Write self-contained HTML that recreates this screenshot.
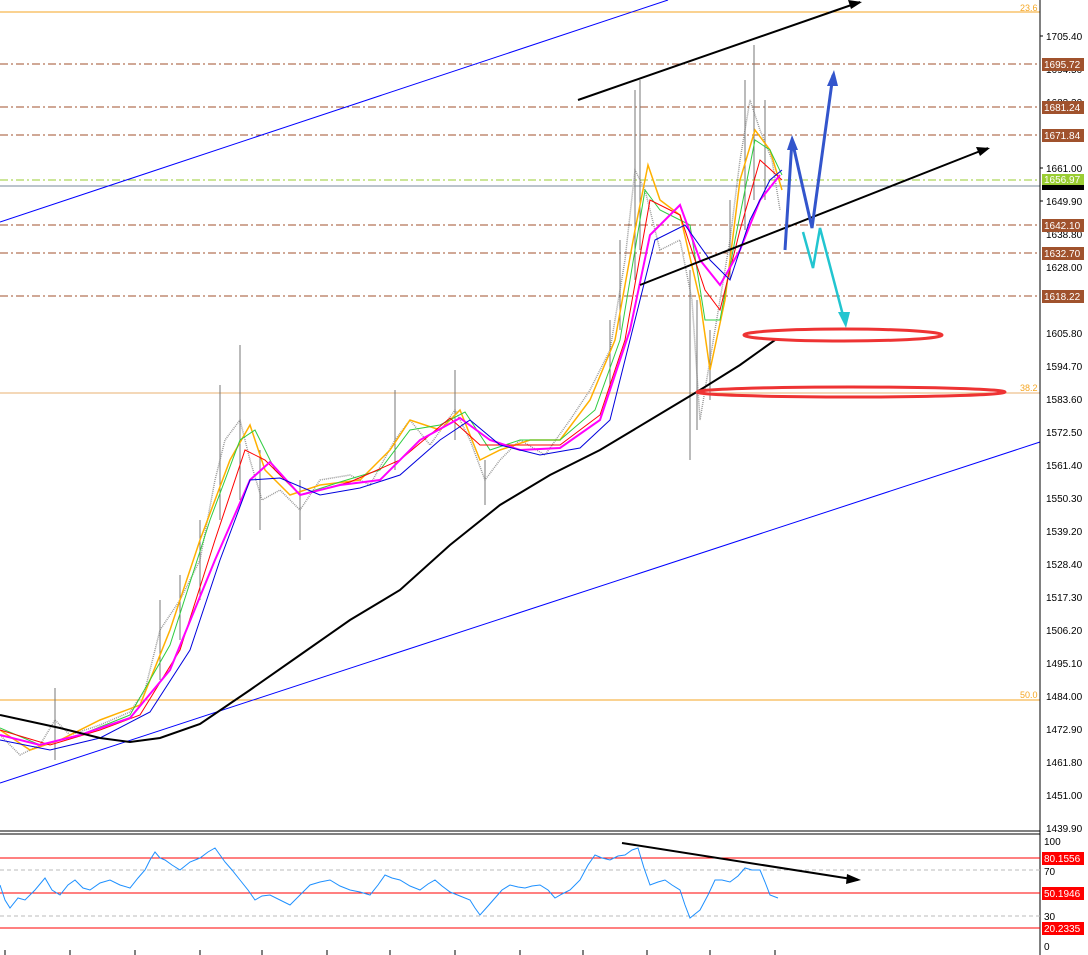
<!DOCTYPE html>
<html><head><style>
body{margin:0;background:#fff;font-family:"Liberation Sans",sans-serif;}
svg{display:block}
.l{font-size:10px;fill:#000}
.t{font-size:10px;fill:#fff}
</style></head><body>
<svg width="1088" height="955" viewBox="0 0 1088 955" xmlns="http://www.w3.org/2000/svg">
<rect width="1088" height="955" fill="#fff"/>
<line x1="0" y1="12" x2="1040" y2="12" stroke="#f5a623" stroke-width="1"/>
<text x="1020" y="11" font-size="9" fill="#f5a623">23.6</text>
<line x1="0" y1="393" x2="1040" y2="393" stroke="#e8b070" stroke-width="1"/>
<text x="1020" y="391" font-size="9" fill="#f5a623">38.2</text>
<line x1="0" y1="700" x2="1040" y2="700" stroke="#f5a623" stroke-width="1"/>
<text x="1020" y="698" font-size="9" fill="#f5a623">50.0</text>
<g stroke="#a0522d" stroke-dasharray="8,3,2,3" stroke-width="1">
<line x1="0" y1="64" x2="1040" y2="64"/><line x1="0" y1="107" x2="1040" y2="107"/>
<line x1="0" y1="135" x2="1040" y2="135"/><line x1="0" y1="225" x2="1040" y2="225"/>
<line x1="0" y1="253" x2="1040" y2="253"/><line x1="0" y1="296" x2="1040" y2="296"/>
</g>
<line x1="0" y1="180" x2="1040" y2="180" stroke="#9acd32" stroke-dasharray="8,3,2,3"/>
<line x1="0" y1="186" x2="1040" y2="186" stroke="#778899"/>
<line x1="0" y1="222" x2="668" y2="0" stroke="#0000ff" stroke-width="1"/>
<line x1="0" y1="783" x2="1040" y2="442" stroke="#0000ff" stroke-width="1"/>
<polyline fill="none" stroke="#999" stroke-width="1.5" stroke-dasharray="1,1" points="0,735 20,755 40,745 55,720 70,735 100,725 130,712 145,690 160,630 180,600 200,560 215,480 225,440 240,420 250,460 262,500 280,490 300,510 320,480 350,475 370,485 395,440 410,420 430,445 455,410 470,440 485,480 500,460 520,440 545,455 570,420 590,390 610,350 625,260 635,170 645,190 660,250 680,240 692,300 700,420 710,360 720,300 730,240 740,160 750,100 760,130 772,160 780,210"/>
<g stroke="#777" stroke-width="1">
<line x1="55" y1="688" x2="55" y2="760"/><line x1="220" y1="385" x2="220" y2="520"/>
<line x1="240" y1="345" x2="240" y2="500"/><line x1="395" y1="390" x2="395" y2="470"/>
<line x1="455" y1="370" x2="455" y2="440"/><line x1="485" y1="460" x2="485" y2="505"/>
<line x1="635" y1="90" x2="635" y2="280"/><line x1="640" y1="80" x2="640" y2="250"/>
<line x1="690" y1="270" x2="690" y2="460"/><line x1="697" y1="300" x2="697" y2="430"/>
<line x1="745" y1="80" x2="745" y2="230"/><line x1="754" y1="45" x2="754" y2="200"/>
<line x1="160" y1="600" x2="160" y2="680"/><line x1="180" y1="575" x2="180" y2="640"/>
<line x1="200" y1="520" x2="200" y2="600"/><line x1="260" y1="450" x2="260" y2="530"/>
<line x1="300" y1="480" x2="300" y2="540"/><line x1="620" y1="240" x2="620" y2="330"/>
<line x1="610" y1="320" x2="610" y2="390"/><line x1="710" y1="330" x2="710" y2="400"/>
<line x1="730" y1="200" x2="730" y2="280"/><line x1="765" y1="100" x2="765" y2="200"/>
</g>
<polyline fill="none" stroke="#ffb000" stroke-width="1.5" points="0,730 30,750 60,740 100,720 140,705 170,630 200,540 230,460 250,425 265,470 290,495 320,485 360,480 390,450 410,420 440,430 460,410 480,460 500,450 530,440 560,440 590,400 615,340 635,230 648,165 660,200 680,215 700,300 710,370 725,300 740,180 755,130 770,150 782,190"/>
<polyline fill="none" stroke="#2ecc40" stroke-width="1" points="0,728 40,745 80,735 130,715 170,645 210,520 240,440 255,430 275,470 300,495 340,482 380,470 410,430 440,425 465,412 490,450 520,440 560,440 595,410 620,340 645,190 660,210 690,225 705,320 720,320 735,240 755,140 770,150 782,175"/>
<polyline fill="none" stroke="#ff0000" stroke-width="1" points="0,730 50,745 100,730 140,715 180,650 215,540 245,450 265,460 300,495 350,482 400,460 450,418 480,445 520,445 560,445 600,415 625,340 650,200 680,215 705,290 720,310 740,230 760,160 782,180"/>
<polyline fill="none" stroke="#ff00ff" stroke-width="2" points="0,735 40,745 80,735 130,718 170,670 215,560 250,480 270,462 300,495 340,485 380,480 420,440 460,418 490,440 520,450 560,448 600,420 630,330 650,235 680,205 700,260 720,285 740,250 760,200 780,175"/>
<polyline fill="none" stroke="#0000dd" stroke-width="1" points="0,740 50,750 100,738 150,712 190,650 220,560 250,480 280,478 320,495 360,488 400,475 440,440 470,420 500,445 540,455 580,448 610,420 635,320 655,240 685,225 710,260 730,280 750,220 770,180 782,170"/>
<polyline fill="none" stroke="#000" stroke-width="2" points="0,715 60,728 100,738 130,742 160,738 200,724 250,690 300,655 350,620 400,590 450,545 500,505 550,475 600,450 650,420 700,390 740,365 775,340"/>
<line x1="578" y1="100" x2="860" y2="2" stroke="#000" stroke-width="2"/>
<polygon points="862,2 848,0 851,9" fill="#000"/>
<line x1="640" y1="285" x2="988" y2="148" stroke="#000" stroke-width="2"/>
<polygon points="990,148 976,147 980,156" fill="#000"/>
<polyline fill="none" stroke="#3355cc" stroke-width="3" points="785,250 792,140 812,228 833,75"/>
<polygon points="792,135 787,150 798,150" fill="#3355cc"/><polygon points="834,70 827,86 838,86" fill="#3355cc"/>
<polyline fill="none" stroke="#22c5d0" stroke-width="2.5" points="803,232 813,268 820,228 845,323"/>
<polygon points="846,328 838,312 850,312" fill="#22c5d0"/>
<ellipse cx="843" cy="335" rx="99" ry="6" fill="none" stroke="#ee3333" stroke-width="3"/>
<ellipse cx="851" cy="392" rx="154" ry="5" fill="none" stroke="#ee3333" stroke-width="3"/>
<line x1="1040" y1="0" x2="1040" y2="955" stroke="#000"/>
<line x1="0" y1="831" x2="1040" y2="831" stroke="#000"/>
<line x1="0" y1="834" x2="1040" y2="834" stroke="#000"/>
<g stroke="#000"><line x1="1040" y1="36" x2="1043" y2="36"/><line x1="1040" y1="168" x2="1043" y2="168"/><line x1="1040" y1="201" x2="1043" y2="201"/></g>
<g class="l">
<text x="1046" y="40">1705.40</text><text x="1046" y="73">1694.50</text><text x="1046" y="106">1683.30</text>
<text x="1046" y="172">1661.00</text><text x="1046" y="205">1649.90</text><text x="1046" y="238">1638.80</text>
<text x="1046" y="271">1628.00</text><text x="1046" y="337">1605.80</text><text x="1046" y="370">1594.70</text>
<text x="1046" y="403">1583.60</text><text x="1046" y="436">1572.50</text><text x="1046" y="469">1561.40</text>
<text x="1046" y="502">1550.30</text><text x="1046" y="535">1539.20</text><text x="1046" y="568">1528.40</text>
<text x="1046" y="601">1517.30</text><text x="1046" y="634">1506.20</text><text x="1046" y="667">1495.10</text>
<text x="1046" y="700">1484.00</text><text x="1046" y="733">1472.90</text><text x="1046" y="766">1461.80</text>
<text x="1046" y="799">1451.00</text><text x="1046" y="832">1439.90</text>
<text x="1044" y="845">100</text><text x="1044" y="875">70</text><text x="1044" y="920">30</text><text x="1044" y="950">0</text>
</g>
<g>
<rect x="1042" y="58" width="42" height="13" fill="#a0522d"/><text class="t" x="1044" y="68">1695.72</text>
<rect x="1042" y="101" width="42" height="13" fill="#a0522d"/><text class="t" x="1044" y="111">1681.24</text>
<rect x="1042" y="129" width="42" height="13" fill="#a0522d"/><text class="t" x="1044" y="139">1671.84</text>
<rect x="1042" y="174" width="42" height="11" fill="#9acd32"/><text class="t" x="1044" y="183">1656.97</text>
<rect x="1042" y="185" width="42" height="5" fill="#000"/>
<rect x="1042" y="219" width="42" height="13" fill="#a0522d"/><text class="t" x="1044" y="229">1642.10</text>
<rect x="1042" y="247" width="42" height="13" fill="#a0522d"/><text class="t" x="1044" y="257">1632.70</text>
<rect x="1042" y="290" width="42" height="13" fill="#a0522d"/><text class="t" x="1044" y="300">1618.22</text>
<rect x="1042" y="852" width="42" height="13" fill="#ff0000"/><text class="t" x="1044" y="862">80.1556</text>
<rect x="1042" y="887" width="42" height="13" fill="#ff0000"/><text class="t" x="1044" y="897">50.1946</text>
<rect x="1042" y="922" width="42" height="13" fill="#ff0000"/><text class="t" x="1044" y="932">20.2335</text>
</g>
<line x1="0" y1="858" x2="1040" y2="858" stroke="#ff0000"/>
<line x1="0" y1="893" x2="1040" y2="893" stroke="#ff0000"/>
<line x1="0" y1="928" x2="1040" y2="928" stroke="#ff0000"/>
<line x1="0" y1="870" x2="1040" y2="870" stroke="#bbb" stroke-dasharray="4,3"/>
<line x1="0" y1="916" x2="1040" y2="916" stroke="#bbb" stroke-dasharray="4,3"/>
<polyline fill="none" stroke="#1e90ff" stroke-width="1" points="0,885 5,900 10,908 18,898 25,900 35,890 45,878 52,890 60,895 68,885 75,880 83,888 90,890 100,883 110,880 120,885 130,888 138,878 145,870 150,860 155,852 160,858 165,860 172,865 180,870 190,862 200,858 208,852 215,848 220,855 225,862 232,870 240,880 248,890 255,900 262,896 270,895 280,900 290,905 300,895 310,885 320,882 330,880 340,886 350,890 360,892 370,895 378,885 385,875 392,878 400,880 410,886 420,890 428,884 435,880 442,886 450,892 460,896 470,900 475,908 480,915 488,906 495,898 502,890 510,885 518,887 525,888 532,886 540,885 548,890 555,898 562,894 570,890 575,885 580,880 588,865 595,855 602,858 610,860 618,856 625,855 632,850 638,848 644,868 650,885 658,882 665,880 672,885 680,890 685,905 690,918 695,914 700,910 708,895 715,880 722,880 730,882 738,876 745,868 752,870 760,870 765,882 770,895 778,898"/>
<line x1="622" y1="843" x2="858" y2="880" stroke="#000" stroke-width="2"/>
<polygon points="861,880 847,874 846,884" fill="#000"/>
<g stroke="#000"><line x1="5" y1="950" x2="5" y2="955"/><line x1="70" y1="950" x2="70" y2="955"/><line x1="135" y1="950" x2="135" y2="955"/><line x1="200" y1="950" x2="200" y2="955"/><line x1="262" y1="950" x2="262" y2="955"/><line x1="327" y1="950" x2="327" y2="955"/><line x1="390" y1="950" x2="390" y2="955"/><line x1="455" y1="950" x2="455" y2="955"/><line x1="520" y1="950" x2="520" y2="955"/><line x1="583" y1="950" x2="583" y2="955"/><line x1="647" y1="950" x2="647" y2="955"/><line x1="710" y1="950" x2="710" y2="955"/><line x1="775" y1="950" x2="775" y2="955"/></g>
</svg>
</body></html>
